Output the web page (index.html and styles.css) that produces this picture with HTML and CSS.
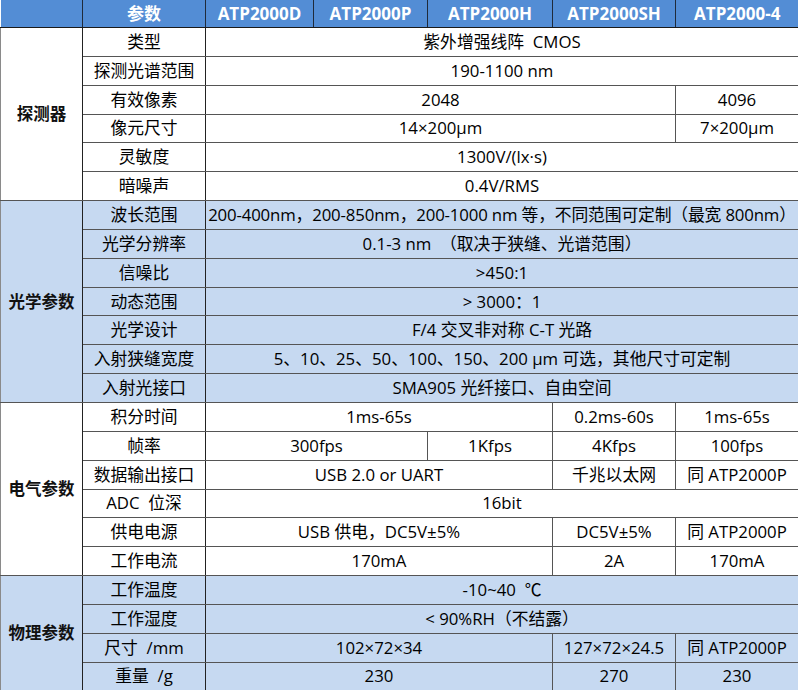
FILE: index.html
```html
<!DOCTYPE html>
<html lang="zh-CN">
<head>
<meta charset="utf-8">
<title>ATP2000 参数</title>
<link rel="stylesheet" href="styles.css">
</head>
<body>
<table class="spec">
  <colgroup>
    <col class="c-group"><col class="c-name"><col class="c-d"><col class="c-p"><col class="c-h"><col class="c-sh"><col class="c-4">
  </colgroup>
  <thead>
    <tr class="head">
      <th></th><th>参数</th><th>ATP2000D</th><th>ATP2000P</th><th>ATP2000H</th><th>ATP2000SH</th><th>ATP2000-4</th>
    </tr>
  </thead>
  <tbody class="white">
    <tr><td class="group" rowspan="6">探测器</td><td class="name">类型</td><td colspan="5">紫外增强线阵&nbsp; CMOS</td></tr>
    <tr><td class="name">探测光谱范围</td><td colspan="5">190-1100 nm</td></tr>
    <tr><td class="name">有效像素</td><td colspan="4">2048</td><td>4096</td></tr>
    <tr><td class="name">像元尺寸</td><td colspan="4">14×200μm</td><td>7×200μm</td></tr>
    <tr><td class="name">灵敏度</td><td colspan="5">1300V/(lx·s)</td></tr>
    <tr><td class="name">暗噪声</td><td colspan="5">0.4V/RMS</td></tr>
  </tbody>
  <tbody class="blue">
    <tr><td class="group" rowspan="7">光学参数</td><td class="name">波长范围</td><td colspan="5" class="tight">200-400nm，200-850nm，200-1000 nm 等，不同范围可定制（最宽 800nm）</td></tr>
    <tr><td class="name">光学分辨率</td><td colspan="5">0.1-3 nm &nbsp;（取决于狭缝、光谱范围）</td></tr>
    <tr><td class="name">信噪比</td><td colspan="5">&gt;450:1</td></tr>
    <tr><td class="name">动态范围</td><td colspan="5">&gt; 3000：1</td></tr>
    <tr><td class="name">光学设计</td><td colspan="5">F/4 交叉非对称 C-T 光路</td></tr>
    <tr><td class="name">入射狭缝宽度</td><td colspan="5">5、10、25、50、100、150、200 μm 可选，其他尺寸可定制</td></tr>
    <tr><td class="name">入射光接口</td><td colspan="5">SMA905 光纤接口、自由空间</td></tr>
  </tbody>
  <tbody class="white">
    <tr><td class="group" rowspan="6">电气参数</td><td class="name">积分时间</td><td colspan="3">1ms-65s</td><td>0.2ms-60s</td><td>1ms-65s</td></tr>
    <tr><td class="name">帧率</td><td colspan="2">300fps</td><td>1Kfps</td><td>4Kfps</td><td>100fps</td></tr>
    <tr><td class="name">数据输出接口</td><td colspan="3">USB 2.0 or UART</td><td>千兆以太网</td><td>同 ATP2000P</td></tr>
    <tr><td class="name">ADC&nbsp; 位深</td><td colspan="5">16bit</td></tr>
    <tr><td class="name">供电电源</td><td colspan="3">USB 供电，DC5V±5%</td><td>DC5V±5%</td><td>同 ATP2000P</td></tr>
    <tr><td class="name">工作电流</td><td colspan="3">170mA</td><td>2A</td><td>170mA</td></tr>
  </tbody>
  <tbody class="blue">
    <tr><td class="group" rowspan="4">物理参数</td><td class="name">工作温度</td><td colspan="5">-10~40 &nbsp;℃</td></tr>
    <tr><td class="name">工作湿度</td><td colspan="5">&lt; 90%RH（不结露）</td></tr>
    <tr><td class="name">尺寸 &nbsp;/mm</td><td colspan="3">102×72×34</td><td>127×72×24.5</td><td>同 ATP2000P</td></tr>
    <tr><td class="name">重量 &nbsp;/g</td><td colspan="3">230</td><td>270</td><td>230</td></tr>
  </tbody>
</table>
</body>
</html>
```

FILE: styles.css
```css
html, body {
  margin: 0;
  padding: 0;
  background: #ffffff;
}

.spec {
  width: 798px;
  table-layout: fixed;
  border-collapse: collapse;
  font-family: "Open Sans", "Noto Sans CJK SC", sans-serif;
  font-size: 16.8px;
  color: #000000;
}

.c-group { width: 82px; }
.c-name { width: 123px; }
.c-d { width: 108px; }
.c-p { width: 114px; }
.c-h { width: 125px; }
.c-sh { width: 123px; }
.c-4 { width: 123px; }

.spec th,
.spec td {
  padding: 0;
  text-align: center;
  vertical-align: middle;
  white-space: nowrap;
  overflow: hidden;
  line-height: 20px;
}

.head th {
  height: 27px;
  background: #538dd5;
  color: #ffffff;
  font-weight: 700;
  font-size: 17px;
  border-left: 1px solid #1f2a3a;
  border-bottom: 1px solid #1a1a1a;
}

.head th:first-child {
  border-left: none;
}

.spec td {
  height: 27.85px;
  border: 1px solid #555555;
  border-top-color: #666666;
}

.spec td.group {
  font-weight: 700;
  font-size: 16.5px;
  color: #111111;
  border-left: 1px solid #8a8a8a;
  border-right: 1px solid #222222;
}

.spec td.name {
  border-right: 1px solid #222222;
}

.white td { background: #ffffff; }
.blue td { background: #c6d9f1; }

.spec tbody {
  border-top: 1px solid #222222;
}

.spec td.tight {
  letter-spacing: -0.15px;
}
```
